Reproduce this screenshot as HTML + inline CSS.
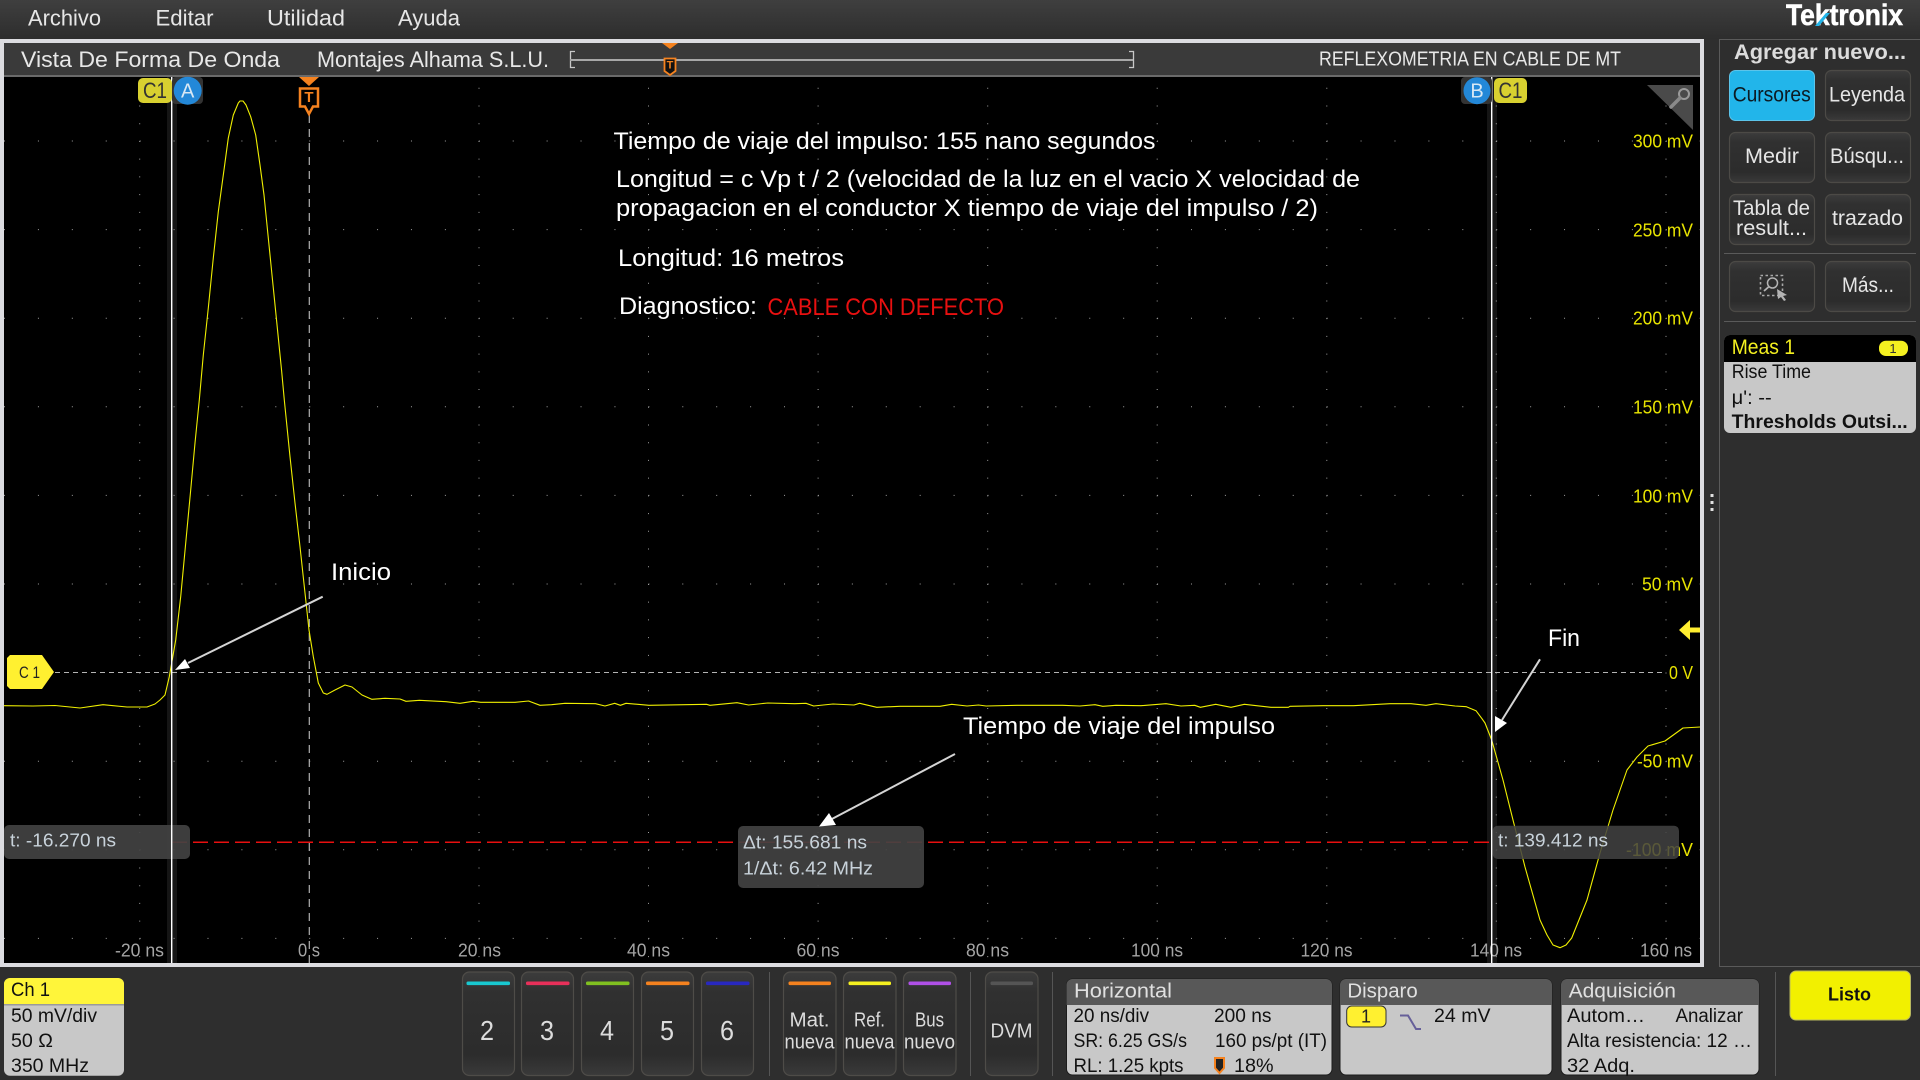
<!DOCTYPE html>
<html lang="es"><head><meta charset="utf-8"><title>Tektronix</title>
<style>
html,body{margin:0;padding:0;background:#2e2e2e;width:1920px;height:1080px;overflow:hidden}
svg{display:block}
text{font-family:"Liberation Sans",sans-serif;dominant-baseline:central;white-space:pre;transform:translateY(.7px)}
.m{font-size:22px;fill:#e6e6e6}
.t{font-size:22px;fill:#e8e8e8}
.y{font-size:18px;fill:#e8e400;text-anchor:end}
.x{font-size:18px;fill:#a4a4a4;text-anchor:middle}
.a{font-size:24px;fill:#fff}
.b{font-size:21px;fill:#e6e6e6;text-anchor:middle}
.d{font-size:19px;fill:#111}
.h{font-size:20px;fill:#e0e0e0}
.c{font-size:18px;fill:#c8d2da}
.n{font-size:28px;fill:#dcdcdc;text-anchor:middle}
.l{font-size:20px;fill:#dcdcdc;text-anchor:middle}
</style></head><body>
<svg xmlns="http://www.w3.org/2000/svg" width="1920" height="1080" viewBox="0 0 1920 1080">
<defs>
<linearGradient id="mg" x1="0" y1="0" x2="0" y2="1"><stop offset="0" stop-color="#3f3f3f"/><stop offset="1" stop-color="#2d2d2d"/></linearGradient>
<linearGradient id="bg" x1="0" y1="0" x2="0" y2="1"><stop offset="0" stop-color="#3c3c3c"/><stop offset=".2" stop-color="#303030"/><stop offset=".8" stop-color="#2c2c2c"/><stop offset="1" stop-color="#3a3a3a"/></linearGradient>
</defs>
<rect width="1920" height="1080" fill="#2e2e2e"/>
<rect width="1920" height="39" fill="url(#mg)"/>
<text class="m" x="28" y="17.500" textLength="73" lengthAdjust="spacingAndGlyphs">Archivo</text>
<text class="m" x="155.500" y="17.500" textLength="58" lengthAdjust="spacingAndGlyphs">Editar</text>
<text class="m" x="267" y="17.500" textLength="78" lengthAdjust="spacingAndGlyphs">Utilidad</text>
<text class="m" x="398" y="17.500" textLength="62" lengthAdjust="spacingAndGlyphs">Ayuda</text>
<text x="1786" y="15" style="font-size:30px;font-weight:bold;fill:#fff;stroke:#fff;stroke-width:.6" textLength="117" lengthAdjust="spacingAndGlyphs">Tektronix</text>
<polygon points="1815,26 1819,26 1830,13 1826,13" fill="#22b5ea"/>

<!-- scope frame -->
<rect x="0" y="39" width="1704" height="928" fill="#dcdce0"/>
<rect x="4" y="43" width="1696" height="33" fill="#3a3a3a"/>
<rect x="4" y="75" width="1696" height="2" fill="#6a6a6a"/>
<rect x="4" y="77" width="1696" height="886" fill="#000"/>
<text class="t" x="21" y="59" textLength="259" lengthAdjust="spacingAndGlyphs">Vista De Forma De Onda</text>
<text class="t" x="317" y="59" textLength="232" lengthAdjust="spacingAndGlyphs">Montajes Alhama S.L.U.</text>
<path d="M575 51.500H570.500V67.500H575M1129 51.500H1133.500V67.500H1129" fill="none" stroke="#c8c8c8" stroke-width="1.300"/>
<rect x="570" y="59" width="563" height="2" fill="#a8a8a8"/>
<polygon points="662,43 678,43 670,49" fill="#f5821f"/>
<path d="M664.500 58.500H675.500V71L670 75L664.500 71Z" fill="#111" stroke="#f5821f" stroke-width="1.800"/>
<text x="670" y="65" style="font-size:11px;font-weight:bold;fill:#f5821f;text-anchor:middle">T</text>
<text x="1319" y="59" style="font-size:20px;fill:#e8e8e8" textLength="302" lengthAdjust="spacingAndGlyphs">REFLEXOMETRIA EN CABLE DE MT</text>

<!-- cursor shades -->
<rect x="167" y="77" width="10" height="886" fill="#151515"/>
<rect x="1487" y="77" width="10" height="886" fill="#151515"/>

<!-- grid dots -->
<g fill="none" stroke="#a0a0a0" stroke-width="1">
<path stroke-dasharray="1 32.914" d="M4 141H1700M4 229.600H1700M4 318.200H1700M4 406.800H1700M4 495.400H1700M4 584H1700M4 761.200H1700M4 849.800H1700M4 938.400H1700"/>
<path stroke-dasharray="1 16.720" d="M139.700 87.800V963M479 87.800V963M648.500 87.800V963M818.100 87.800V963M987.700 87.800V963M1157.200 87.800V963M1326.800 87.800V963M1496.300 87.800V963M1666 87.800V963"/>
</g>
<path d="M55 672.500H1662" stroke="#b4b4b4" stroke-width="1" stroke-dasharray="5 4" fill="none"/>
<path d="M309.300 115V963" stroke="#b0b0b0" stroke-width="1.200" stroke-dasharray="8 6" fill="none"/>
<path d="M172 842.300H1491" stroke="#e80f0f" stroke-width="1.500" stroke-dasharray="15 6" fill="none"/>

<!-- trace -->
<polyline fill="none" stroke="#f0f000" stroke-width="1.100" stroke-linejoin="round" points="4,705.700 33,706 55,705.500 80,708 103,704.700 127,707 147,707 155,704 160,700 165,695 169.300,676.700 171.700,663 175.700,640 180.700,596.700 186,540 190.700,490 195,443 199.300,400 203.300,355 208.300,308 213.300,258 218.300,211.700 223.300,175 228.300,138 233.300,115 238.300,103 240,101 243,101 246,105 250.700,116.700 255.700,135 260,165 264,195 268.300,238 272.300,278 276.700,321.700 281.700,371.700 284.300,400 290,456.700 295,503 300,546.700 305,593 309,630 313.300,656.700 318.300,683 323.300,693 327,694.300 335,690 345,685 352,687 362,695 371.700,699.300 385,698.300 400,699 406,701.300 419.500,700.300 446,701.700 460,703.300 473,701.300 480.700,702.300 515,702.300 528.600,701 540,705.300 551.500,704.700 565,703.300 595.500,703.700 605,706 614.700,703.300 620.400,705.300 626,703.300 649,705.300 706.500,704.300 710,705.300 737,702.700 748.600,705 767.800,703 794.600,703.700 806,703.300 813.700,706 833,704 854,705 859.600,703.300 876.800,707.300 899.800,706.300 940,706.300 951.700,704.300 967,706 978.500,705 986,706 1018.600,705.300 1062.600,705.300 1080,706 1095,704.700 1102.800,706.300 1116,705.300 1141,705.700 1166,703.700 1181,706 1194.700,705.300 1200.400,707.300 1215.700,704.300 1231,707.300 1244.400,704.300 1271,707.300 1288.400,707.300 1290,706.300 1323,705.700 1353.500,705.700 1390,703.700 1411,703.700 1426,705.300 1436,703.700 1455,706 1466.400,706.700 1476,710.700 1481.700,718.300 1485,723 1491.700,740 1503,780 1513,820 1525,867 1540,920 1547,935 1553,945 1560,947.700 1566,945 1571.700,938 1587,900 1600,853 1613,810 1627,770 1637,757 1648,746 1665,741 1683,728 1700,727"/>

<!-- y labels -->
<text class="y" x="1693" y="141" textLength="60" lengthAdjust="spacingAndGlyphs">300 mV</text>
<text class="y" x="1693" y="230" textLength="60" lengthAdjust="spacingAndGlyphs">250 mV</text>
<text class="y" x="1693" y="318" textLength="60" lengthAdjust="spacingAndGlyphs">200 mV</text>
<text class="y" x="1693" y="407" textLength="60" lengthAdjust="spacingAndGlyphs">150 mV</text>
<text class="y" x="1693" y="496" textLength="60" lengthAdjust="spacingAndGlyphs">100 mV</text>
<text class="y" x="1693" y="584" textLength="51" lengthAdjust="spacingAndGlyphs">50 mV</text>
<text class="y" x="1693" y="672.500" textLength="24" lengthAdjust="spacingAndGlyphs">0 V</text>
<text class="y" x="1693" y="761" textLength="56" lengthAdjust="spacingAndGlyphs">-50 mV</text>
<text class="y" x="1693" y="849.500" textLength="67" lengthAdjust="spacingAndGlyphs">-100 mV</text>

<!-- x labels -->
<text class="x" x="139.500" y="950" textLength="49" lengthAdjust="spacingAndGlyphs">-20 ns</text>
<text class="x" x="309" y="950" textLength="22" lengthAdjust="spacingAndGlyphs">0 s</text>
<text class="x" x="479.500" y="950" textLength="43" lengthAdjust="spacingAndGlyphs">20 ns</text>
<text class="x" x="648.500" y="950" textLength="43" lengthAdjust="spacingAndGlyphs">40 ns</text>
<text class="x" x="818" y="950" textLength="43" lengthAdjust="spacingAndGlyphs">60 ns</text>
<text class="x" x="987.500" y="950" textLength="43" lengthAdjust="spacingAndGlyphs">80 ns</text>
<text class="x" x="1157" y="950" textLength="52" lengthAdjust="spacingAndGlyphs">100 ns</text>
<text class="x" x="1326.500" y="950" textLength="52" lengthAdjust="spacingAndGlyphs">120 ns</text>
<text class="x" x="1496" y="950" textLength="52" lengthAdjust="spacingAndGlyphs">140 ns</text>
<text class="x" x="1666" y="950" textLength="52" lengthAdjust="spacingAndGlyphs">160 ns</text>

<!-- readout boxes -->
<rect x="4" y="825" width="186" height="34" rx="5" fill="#424242" fill-opacity=".92"/>
<rect x="738" y="826" width="186" height="62" rx="5" fill="#424242" fill-opacity=".92"/>
<rect x="1492.700" y="825.700" width="186.300" height="33.300" rx="5" fill="#424242" fill-opacity=".86"/>
<text class="c" x="10" y="840" textLength="106" lengthAdjust="spacingAndGlyphs">t: -16.270 ns</text>
<text class="c" x="743" y="842" textLength="124" lengthAdjust="spacingAndGlyphs">Δt: 155.681 ns</text>
<text class="c" x="743" y="868" textLength="130" lengthAdjust="spacingAndGlyphs">1/Δt: 6.42 MHz</text>
<text class="c" x="1498" y="840" textLength="110" lengthAdjust="spacingAndGlyphs">t: 139.412 ns</text>

<!-- cursors -->
<rect x="171" y="77" width="1.400" height="886" fill="#fff"/>
<rect x="1491" y="77" width="1.400" height="886" fill="#fff"/>
<rect x="172" y="77" width="31" height="27" rx="4" fill="#333"/>
<rect x="1461" y="77" width="31" height="27" rx="4" fill="#333"/>
<rect x="138" y="78" width="34" height="25" rx="5" fill="#d8d030"/>
<text x="155" y="90" style="font-size:22px;fill:#333;text-anchor:middle" textLength="24" lengthAdjust="spacingAndGlyphs">C1</text>
<circle cx="187.700" cy="90.700" r="14" fill="#2388d8"/>
<text x="187.700" y="90.700" style="font-size:20px;fill:#d8e8f4;text-anchor:middle">A</text>
<circle cx="1477" cy="90.700" r="13.500" fill="#2388d8"/>
<text x="1477" y="90.700" style="font-size:20px;fill:#d8e8f4;text-anchor:middle">B</text>
<rect x="1494" y="78" width="33" height="25" rx="5" fill="#d8d030"/>
<text x="1510.500" y="90" style="font-size:22px;fill:#333;text-anchor:middle" textLength="24" lengthAdjust="spacingAndGlyphs">C1</text>

<!-- T marker -->
<polygon points="299,77 319,77 309,86" fill="#f5821f"/>
<path d="M300 88.500H318V106.500H313L309 114L305 106.500H300Z" fill="#000" stroke="#f5821f" stroke-width="2.500" stroke-linejoin="miter"/>
<text x="309" y="97" style="font-size:15px;font-weight:bold;fill:#f5821f;text-anchor:middle">T</text>

<!-- zoom corner -->
<polygon points="1647,85 1693,85 1693,130" fill="#4a4a4a"/>
<circle cx="1684" cy="94" r="5" fill="none" stroke="#9a9a9a" stroke-width="2"/>
<path d="M1680 98L1671 107" stroke="#8a8a8a" stroke-width="3.500" stroke-linecap="round"/>

<!-- C1 tag and level arrow -->
<polygon points="10,655 42,655 54,672 42,689 10,689 7,686 7,658" fill="#fff030"/>
<text x="19" y="672" style="font-size:17px;fill:#222" textLength="21" lengthAdjust="spacingAndGlyphs">C 1</text>
<polygon points="1679,630 1690,620 1690,627.500 1700,627.500 1700,632.500 1690,632.500 1690,640" fill="#ffee30"/>

<!-- annotations -->
<text class="a" x="613.500" y="141" textLength="542" lengthAdjust="spacingAndGlyphs">Tiempo de viaje del impulso: 155 nano segundos</text>
<text class="a" x="616" y="179" textLength="744" lengthAdjust="spacingAndGlyphs">Longitud = c Vp t / 2 (velocidad de la luz en el vacio X velocidad de</text>
<text class="a" x="616" y="208" textLength="702" lengthAdjust="spacingAndGlyphs">propagacion en el conductor X tiempo de viaje del impulso / 2)</text>
<text class="a" x="618" y="258" textLength="226" lengthAdjust="spacingAndGlyphs">Longitud: 16 metros</text>
<text class="a" x="619" y="306" textLength="138" lengthAdjust="spacingAndGlyphs">Diagnostico:</text>
<text class="a" x="767.500" y="307" style="fill:#e81010" textLength="236.500" lengthAdjust="spacingAndGlyphs">CABLE CON DEFECTO</text>
<text class="a" x="331" y="572" textLength="60" lengthAdjust="spacingAndGlyphs">Inicio</text>
<text class="a" x="1548" y="638" textLength="32" lengthAdjust="spacingAndGlyphs">Fin</text>
<text class="a" x="963" y="726" textLength="312" lengthAdjust="spacingAndGlyphs">Tiempo de viaje del impulso</text>

<g stroke="#d4d4d4" stroke-width="2" fill="#fff">
<path d="M322.700 596.700L188 663"/><polygon stroke="none" points="175,670 185,659 190,668"/>
<path d="M1540 659.300L1502 720"/><polygon stroke="none" points="1495,732 1495,716 1507,723"/>
<path d="M955 754L830 820"/><polygon stroke="none" points="819,826.500 829,813 836,825"/>
</g>

<!-- splitter -->
<g fill="#e0e0e0"><rect x="1710.500" y="494" width="3" height="3"/><rect x="1710.500" y="501" width="3" height="3"/><rect x="1710.500" y="508" width="3" height="3"/></g>

<!-- sidebar -->
<path d="M1719.500 967V39.500H1920M1719.500 966.500H1920" fill="none" stroke="#5a5a5a" stroke-width="1"/>
<text x="1734" y="52" style="font-size:21px;font-weight:bold;fill:#dcdcdc" textLength="172" lengthAdjust="spacingAndGlyphs">Agregar nuevo...</text>

<rect x="1729.500" y="70.500" width="85" height="50" rx="6" fill="#22b5ea" stroke="#5cc4ea"/>
<g fill="url(#bg)" stroke="#4c4a46" stroke-width="1.200">
<rect x="1825.500" y="70.500" width="85" height="50" rx="6"/>
<rect x="1729.500" y="132.500" width="85" height="50" rx="6"/>
<rect x="1825.500" y="132.500" width="85" height="50" rx="6"/>
<rect x="1729.500" y="194.500" width="85" height="50" rx="6"/>
<rect x="1825.500" y="194.500" width="85" height="50" rx="6"/>
<rect x="1729.500" y="261.500" width="85" height="50" rx="6"/>
<rect x="1825.500" y="261.500" width="85" height="50" rx="6"/>
</g>
<text class="b" x="1771.700" y="94.300" style="fill:#0c1a22" textLength="78" lengthAdjust="spacingAndGlyphs">Cursores</text>
<text class="b" x="1867" y="94.300" textLength="76" lengthAdjust="spacingAndGlyphs">Leyenda</text>
<text class="b" x="1772" y="156" textLength="54" lengthAdjust="spacingAndGlyphs">Medir</text>
<text class="b" x="1867" y="156" textLength="74" lengthAdjust="spacingAndGlyphs">Búsqu...</text>
<text class="b" x="1771.500" y="208" textLength="77" lengthAdjust="spacingAndGlyphs">Tabla de</text>
<text class="b" x="1771.500" y="228" textLength="71" lengthAdjust="spacingAndGlyphs">result...</text>
<text class="b" x="1867.500" y="218" textLength="71" lengthAdjust="spacingAndGlyphs">trazado</text>
<text class="b" x="1868" y="285" textLength="52" lengthAdjust="spacingAndGlyphs">Más...</text>
<rect x="1760.500" y="275.500" width="22" height="20" fill="none" stroke="#a8a8a8" stroke-width="1.600" stroke-dasharray="2.500 2.500"/>
<circle cx="1772.500" cy="283" r="5" fill="none" stroke="#b4b4b4" stroke-width="1.500"/>
<path d="M1768.500 287L1764 291" stroke="#b4b4b4" stroke-width="1.800"/>
<polygon points="1777,289 1787,295 1783,296 1786,300 1784,301 1781,297 1778,299" fill="#b4b4b4"/>
<rect x="1724" y="253" width="192" height="1" fill="#5a5a5a"/>
<rect x="1724" y="321" width="192" height="1" fill="#5a5a5a"/>

<rect x="1724" y="335" width="192" height="98" rx="6" fill="#c8c8c8"/>
<path d="M1724 362V341a6 6 0 0 1 6-6H1910a6 6 0 0 1 6 6V362Z" fill="#000"/>
<text x="1731.700" y="347" style="font-size:21px;fill:#f4f020" textLength="63.300" lengthAdjust="spacingAndGlyphs">Meas 1</text>
<rect x="1879" y="340.700" width="29" height="15.300" rx="7" fill="#f4f020"/>
<text x="1893" y="348" style="font-size:13px;fill:#333;text-anchor:middle">1</text>
<text class="d" x="1731.700" y="372" textLength="79.300" lengthAdjust="spacingAndGlyphs">Rise Time</text>
<text class="d" x="1731.700" y="397.700" textLength="40" lengthAdjust="spacingAndGlyphs">μ': --</text>
<text class="d" x="1731.700" y="422" style="font-weight:bold" textLength="176" lengthAdjust="spacingAndGlyphs">Thresholds Outsi...</text>

<!-- bottom: Ch1 -->
<rect x="4" y="978.300" width="120" height="97.400" rx="6" fill="#c8c8c8"/>
<path d="M4 1004V984a6 6 0 0 1 6-6H118a6 6 0 0 1 6 6V1004Z" fill="#fff53a"/>
<rect x="4" y="1004" width="120" height="1.500" fill="#9a9a9a"/>
<text class="d" x="11" y="990" textLength="39" lengthAdjust="spacingAndGlyphs">Ch 1</text>
<text class="d" x="11" y="1016" textLength="86" lengthAdjust="spacingAndGlyphs">50 mV/div</text>
<text class="d" x="11" y="1041" textLength="42" lengthAdjust="spacingAndGlyphs">50 Ω</text>
<text class="d" x="11" y="1066" textLength="78" lengthAdjust="spacingAndGlyphs">350 MHz</text>

<!-- channel buttons -->
<g fill="url(#bg)" stroke="#4e4c48" stroke-width="1.200">
<rect x="462.500" y="972" width="52" height="103.500" rx="7"/>
<rect x="521.500" y="972" width="52" height="103.500" rx="7"/>
<rect x="581.500" y="972" width="52" height="103.500" rx="7"/>
<rect x="641.500" y="972" width="52" height="103.500" rx="7"/>
<rect x="701.500" y="972" width="52" height="103.500" rx="7"/>
<rect x="783.500" y="972" width="52.500" height="103.500" rx="7"/>
<rect x="843.500" y="972" width="52.500" height="103.500" rx="7"/>
<rect x="903.500" y="972" width="52.500" height="103.500" rx="7"/>
<rect x="985.500" y="972" width="52.500" height="103.500" rx="7"/>
</g>
<rect x="466.500" y="981.500" width="43.500" height="3.600" rx="1.500" fill="#18c8d0"/>
<rect x="526" y="981.500" width="43.500" height="3.600" rx="1.500" fill="#e8305a"/>
<rect x="586" y="981.500" width="43.500" height="3.600" rx="1.500" fill="#80c020"/>
<rect x="646" y="981.500" width="43.500" height="3.600" rx="1.500" fill="#f5821f"/>
<rect x="706" y="981.500" width="43.500" height="3.600" rx="1.500" fill="#2828c0"/>
<rect x="788.500" y="981.500" width="42.500" height="3.600" rx="1.500" fill="#f5821f"/>
<rect x="848.500" y="981.500" width="42.500" height="3.600" rx="1.500" fill="#f5f020"/>
<rect x="908.500" y="981.500" width="42.500" height="3.600" rx="1.500" fill="#b050e8"/>
<rect x="990.500" y="981.500" width="42.500" height="3.600" rx="1.500" fill="#555"/>
<text class="n" x="487" y="1030" textLength="14" lengthAdjust="spacingAndGlyphs">2</text>
<text class="n" x="547" y="1030" textLength="14" lengthAdjust="spacingAndGlyphs">3</text>
<text class="n" x="607" y="1030" textLength="14" lengthAdjust="spacingAndGlyphs">4</text>
<text class="n" x="667" y="1030" textLength="14" lengthAdjust="spacingAndGlyphs">5</text>
<text class="n" x="727" y="1030" textLength="14" lengthAdjust="spacingAndGlyphs">6</text>
<text class="l" x="809.500" y="1020" textLength="40" lengthAdjust="spacingAndGlyphs">Mat.</text>
<text class="l" x="809.500" y="1042" textLength="50" lengthAdjust="spacingAndGlyphs">nueva</text>
<text class="l" x="869.500" y="1020" textLength="31" lengthAdjust="spacingAndGlyphs">Ref.</text>
<text class="l" x="869.500" y="1042" textLength="50" lengthAdjust="spacingAndGlyphs">nueva</text>
<text class="l" x="929.500" y="1020" textLength="29" lengthAdjust="spacingAndGlyphs">Bus</text>
<text class="l" x="929.500" y="1042" textLength="51" lengthAdjust="spacingAndGlyphs">nuevo</text>
<text class="l" x="1011.500" y="1030.700" textLength="42" lengthAdjust="spacingAndGlyphs">DVM</text>
<g fill="#555"><rect x="769" y="972" width="1" height="104"/><rect x="970" y="972" width="1" height="104"/><rect x="1052" y="972" width="1" height="104"/><rect x="1775" y="972" width="1" height="104"/></g>

<!-- info panels -->
<g fill="#c8c8c8" stroke="#1c1c1c" stroke-width="1">
<rect x="1066.500" y="979" width="265.500" height="96" rx="6"/>
<rect x="1340" y="979" width="212" height="96" rx="6"/>
<rect x="1561" y="979" width="198" height="96" rx="6"/>
</g>
<g fill="#585858">
<path d="M1066.500 1005V985a6 6 0 0 1 6-6H1326a6 6 0 0 1 6 6V1005Z"/>
<path d="M1340 1005V985a6 6 0 0 1 6-6H1546a6 6 0 0 1 6 6V1005Z"/>
<path d="M1561 1005V985a6 6 0 0 1 6-6H1753a6 6 0 0 1 6 6V1005Z"/>
</g>
<text class="h" x="1074" y="991" textLength="98" lengthAdjust="spacingAndGlyphs">Horizontal</text>
<text class="d" x="1073.500" y="1016" textLength="75.500" lengthAdjust="spacingAndGlyphs">20 ns/div</text>
<text class="d" x="1214" y="1016" textLength="57.400" lengthAdjust="spacingAndGlyphs">200 ns</text>
<text class="d" x="1073.500" y="1041" textLength="113.500" lengthAdjust="spacingAndGlyphs">SR: 6.25 GS/s</text>
<text class="d" x="1215" y="1041" textLength="112" lengthAdjust="spacingAndGlyphs">160 ps/pt (IT)</text>
<text class="d" x="1073.500" y="1066" textLength="110" lengthAdjust="spacingAndGlyphs">RL: 1.25 kpts</text>
<path d="M1215 1058H1224V1068L1219.500 1073L1215 1068Z" fill="#222" stroke="#f5821f" stroke-width="2"/>
<text class="d" x="1234" y="1066" textLength="39.500" lengthAdjust="spacingAndGlyphs">18%</text>

<text class="h" x="1347.400" y="991" textLength="70.300" lengthAdjust="spacingAndGlyphs">Disparo</text>
<rect x="1346.700" y="1006" width="39.300" height="21" rx="5" fill="#fff030" stroke="#333" stroke-width="1"/>
<text x="1366" y="1016" style="font-size:18px;fill:#222;text-anchor:middle">1</text>
<path d="M1400 1015.500H1408L1416 1029H1421" fill="none" stroke="#665f99" stroke-width="2"/>
<text class="d" x="1434" y="1016" textLength="56.600" lengthAdjust="spacingAndGlyphs">24 mV</text>

<text class="h" x="1568.600" y="991" textLength="107.400" lengthAdjust="spacingAndGlyphs">Adquisición</text>
<text class="d" x="1567" y="1016" textLength="78" lengthAdjust="spacingAndGlyphs">Autom…</text>
<text class="d" x="1675.500" y="1016" textLength="67.500" lengthAdjust="spacingAndGlyphs">Analizar</text>
<text class="d" x="1567" y="1041" textLength="185" lengthAdjust="spacingAndGlyphs">Alta resistencia: 12 …</text>
<text class="d" x="1567" y="1066" textLength="68" lengthAdjust="spacingAndGlyphs">32 Adq.</text>

<rect x="1790" y="971" width="120.500" height="49" rx="6" fill="#f2f000" stroke="#b8b860" stroke-width="1"/>
<text x="1828" y="994" style="font-size:18px;font-weight:bold;fill:#111" textLength="43" lengthAdjust="spacingAndGlyphs">Listo</text>
</svg>
</body></html>
